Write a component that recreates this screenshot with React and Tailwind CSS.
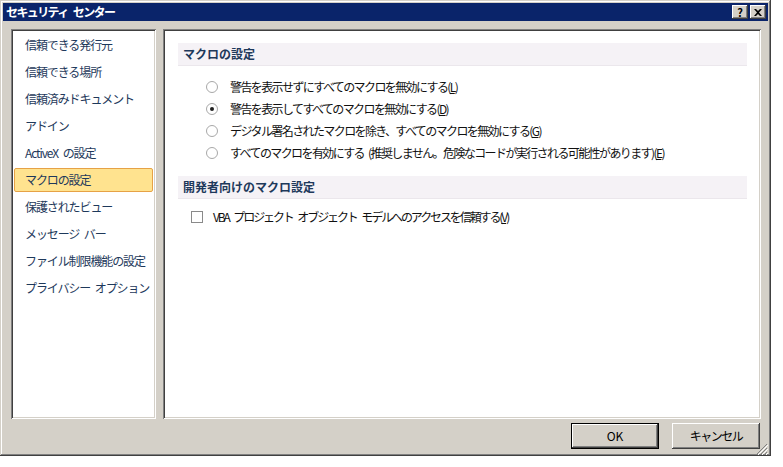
import { useState } from 'react';

const navItems = [
  '信頼できる発行元',
  '信頼できる場所',
  '信頼済みドキュメント',
  'アドイン',
  'ActiveX の設定',
  'マクロの設定',
  '保護されたビュー',
  'メッセージ バー',
  'ファイル制限機能の設定',
  'プライバシー オプション',
];

const macroOptions = [
  { label: '警告を表示せずにすべてのマクロを無効にする', key: 'L' },
  { label: '警告を表示してすべてのマクロを無効にする', key: 'D' },
  { label: 'デジタル署名されたマクロを除き、すべてのマクロを無効にする', key: 'G' },
  { label: 'すべてのマクロを有効にする (推奨しません。危険なコードが実行される可能性があります)', key: 'E' },
];

const font = { fontFamily: '"MS UI Gothic", "Noto Sans CJK JP", sans-serif' };

function Radio({ checked }) {
  return (
    <span className="w-[12px] h-[12px] rounded-full border border-[#a8a8a8] bg-white flex items-center justify-center shrink-0">
      {checked && <span className="w-[4px] h-[4px] rounded-full bg-[#202020]" />}
    </span>
  );
}

function SectionHeader({ children }) {
  return (
    <div className="h-[23px] bg-[#f5f2f6] border-b border-[#ebe7ec] flex items-center pl-[5px] text-[12px] font-bold text-[#1e395b] whitespace-nowrap">
      {children}
    </div>
  );
}

function App() {
  const [selected, setSelected] = useState(5);
  const [macro, setMacro] = useState(1);
  const [vba, setVba] = useState(false);

  return (
    <div className="w-[783px] h-[467px] bg-white" style={font}>
      <div className="w-[771px] h-[456px] bg-[#d4d0c8] p-[3px] flex flex-col shadow-[inset_-1px_-1px_#404040,inset_1px_1px_#d4d0c8,inset_-2px_-2px_#808080,inset_2px_2px_#ffffff]">
        <div className="h-[18px] bg-[#0a246a] flex items-center justify-between pl-[3px] pr-[2px]">
          <span className="text-white font-bold text-[12px] leading-none tracking-[-1.6px] [word-spacing:4px] whitespace-nowrap">セキュリティ センター</span>
          <div className="flex gap-[2px]">
            <button className="w-[16px] h-[14px] bg-[#d4d0c8] flex items-center justify-center text-[11px] font-bold leading-none text-black shadow-[inset_-1px_-1px_#404040,inset_1px_1px_#ffffff,inset_-2px_-2px_#808080]">
              ?
            </button>
            <button className="w-[16px] h-[14px] bg-[#d4d0c8] flex items-center justify-center shadow-[inset_-1px_-1px_#404040,inset_1px_1px_#ffffff,inset_-2px_-2px_#808080]">
              <svg width="8" height="7" viewBox="0 0 8 7">
                <path d="M0 0h2l2 2 2-2h2L5 3.5 8 7H6L4 5 2 7H0l3-3.5z" fill="#000" />
              </svg>
            </button>
          </div>
        </div>

        <div className="flex gap-[7px] pl-[8px] pt-[8px]">
          <div className="w-[145px] h-[390px] bg-white p-[2px] shadow-[inset_1px_1px_#808080,inset_-1px_-1px_#ffffff,inset_2px_2px_#404040,inset_-2px_-2px_#d4d0c8]">
            <div className="flex flex-col gap-[3px] pt-[2px] px-[1px]">
              {navItems.map((item, i) => (
                <div
                  key={item}
                  onClick={() => setSelected(i)}
                  className={
                    'h-[24px] flex items-center text-[12px] text-[#1e395b] tracking-[-1.1px] [word-spacing:3px] whitespace-nowrap cursor-default rounded-[2px] ' +
                    (selected === i ? 'bg-[#ffe38f] border border-[#e6a246] pl-[10px]' : 'pl-[11px]')
                  }
                >
                  {item}
                </div>
              ))}
            </div>
          </div>

          <div className="w-[598px] h-[390px] bg-white p-[2px] shadow-[inset_1px_1px_#808080,inset_-1px_-1px_#ffffff,inset_2px_2px_#404040,inset_-2px_-2px_#d4d0c8]">
            <div className="pl-[13px] pr-[12px] pt-[12px] flex flex-col">
              <SectionHeader>マクロの設定</SectionHeader>
              <div className="flex flex-col pt-[10px] pl-[28px]">
                {macroOptions.map((opt, i) => (
                  <label
                    key={opt.key}
                    onClick={() => setMacro(i)}
                    className="h-[22px] flex items-center gap-[12px] text-[12px] text-[#111] tracking-[-1.6px] [word-spacing:3px] whitespace-nowrap"
                  >
                    <Radio checked={macro === i} />
                    <span>
                      {opt.label}(<span className="underline">{opt.key}</span>)
                    </span>
                  </label>
                ))}
              </div>
              <div className="mt-[12px]">
                <SectionHeader>開発者向けのマクロ設定</SectionHeader>
              </div>
              <label
                onClick={() => setVba(!vba)}
                className="mt-[7px] ml-[13px] h-[22px] flex items-center gap-[10px] text-[12px] text-[#111] tracking-[-2.1px] [word-spacing:4px] whitespace-nowrap"
              >
                <span className="w-[12px] h-[12px] border border-[#8a8a8a] bg-white shrink-0 flex items-center justify-center text-[10px] leading-none">
                  {vba ? '✓' : ''}
                </span>
                <span>
                  VBA プロジェクト オブジェクト モデルへのアクセスを信頼する(<span className="underline">V</span>)
                </span>
              </label>
            </div>
          </div>
        </div>

        <div className="flex justify-end gap-[13px] pt-[4px] pr-[8px] relative">
          <button className="w-[88px] h-[26px] bg-[#d4d0c8] border border-black text-[12px] text-black shadow-[inset_-1px_-1px_#404040,inset_1px_1px_#ffffff,inset_-2px_-2px_#808080]">
            OK
          </button>
          <button className="w-[88px] h-[26px] bg-[#d4d0c8] text-[12px] text-black tracking-[-1.5px] shadow-[inset_-1px_-1px_#404040,inset_1px_1px_#ffffff,inset_-2px_-2px_#808080]">
            キャンセル
          </button>
          <svg className="absolute right-0 bottom-[-6px]" width="12" height="12" viewBox="0 0 12 12">
            <path d="M11 1L1 11M11 5L5 11M11 9L9 11" stroke="#808080" strokeWidth="1" />
            <path d="M12 2L2 12M12 6L6 12M12 10L10 12" stroke="#ffffff" strokeWidth="1" />
          </svg>
        </div>
      </div>
    </div>
  );
}

export default App;
